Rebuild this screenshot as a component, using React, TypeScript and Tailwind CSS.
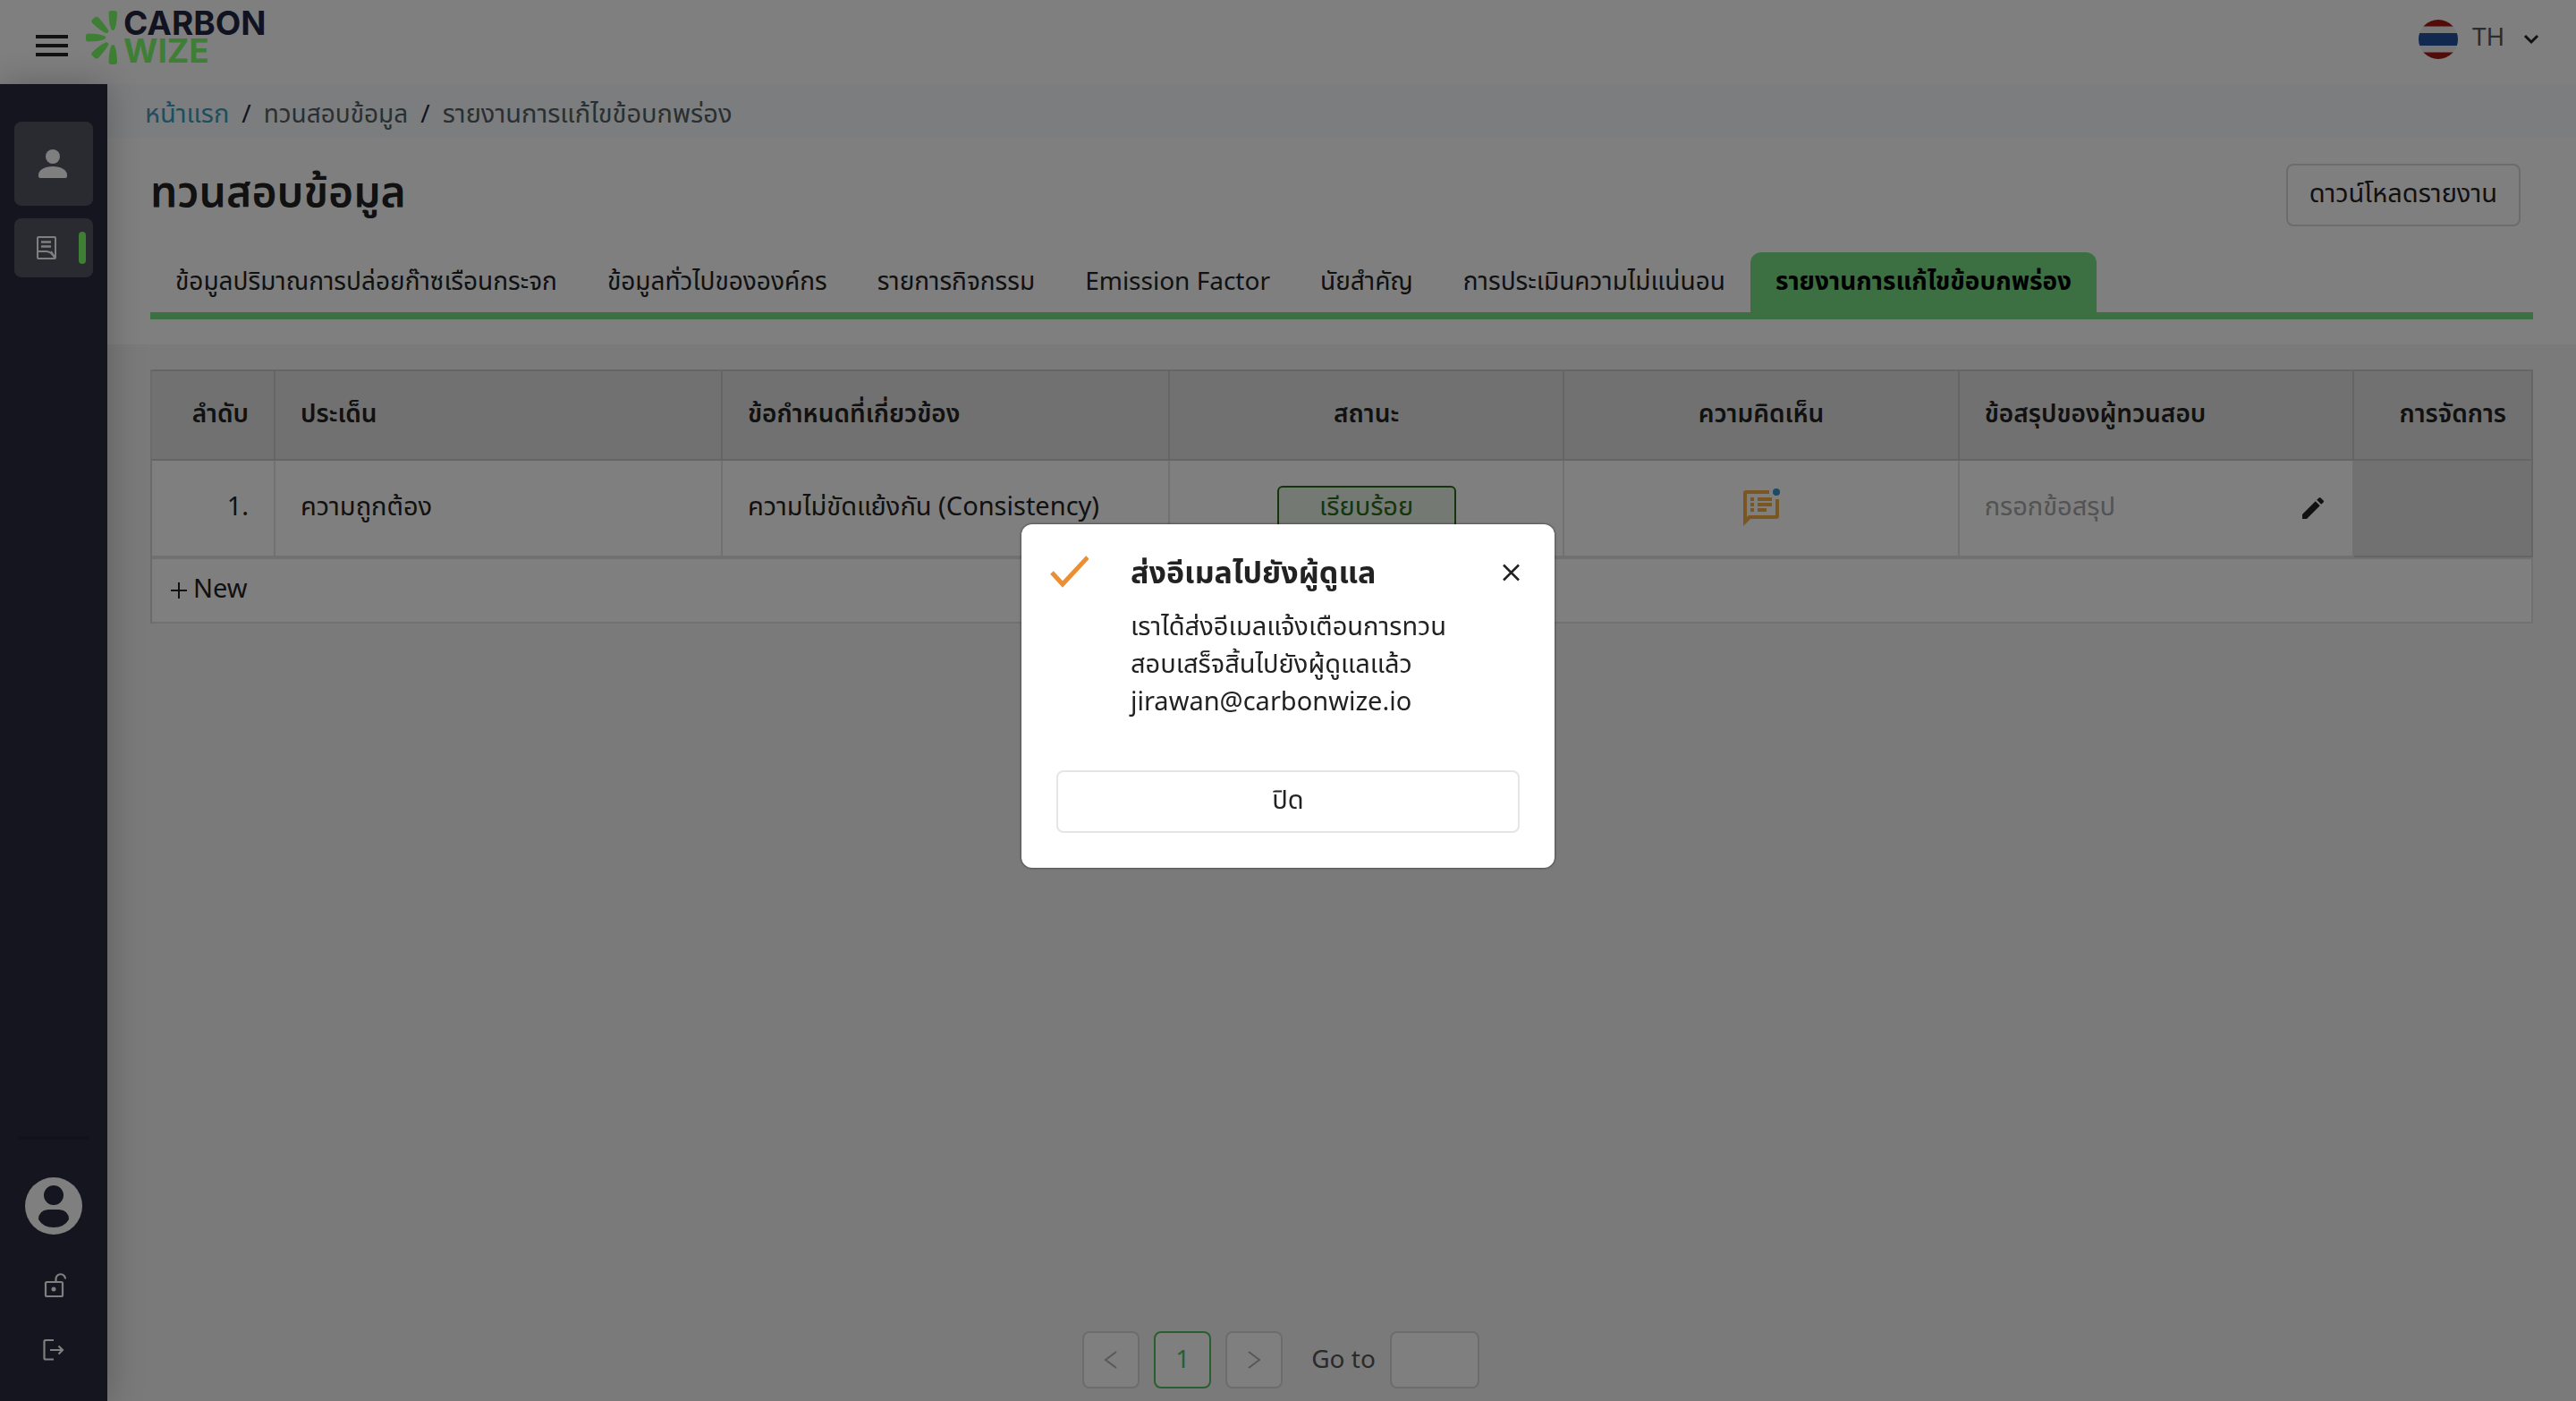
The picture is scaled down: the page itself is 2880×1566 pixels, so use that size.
import React from "react";

const tabs = [
  "ข้อมูลปริมาณการปล่อยก๊าซเรือนกระจก",
  "ข้อมูลทั่วไปขององค์กร",
  "รายการกิจกรรม",
  "Emission Factor",
  "นัยสำคัญ",
  "การประเมินความไม่แน่นอน",
];

function Logo() {
  return (
    <a href="#" aria-label="Carbon Wize" className="flex items-start gap-1.5">
      <svg width="36" height="60" viewBox="0 0 36 60" fill="#7efc6a" className="shrink-0">
        <path d="M25.500 3q0-3 3-3h3.500q3 0 3 3-.5 14-3 18-1.700 2-3.500 0-2.500-4-3-18z" />
        <path d="M25.500 57q0 3 3 3h3.500q3 0 3-3-.5-13-3-18-1.700-2-3.500 0-2.500 5-3 18z" />
        <path d="M2.500 25.500Q0 25.500 0 28v4q0 2.500 2.500 2.500 12.500 0 18-2.500 3.500-2 0-4-5.500-2.500-18-2.500z" />
        <path d="M7 13.500q-1.500-2 0-3.500l3.500-3q2-1 4 1 8 9 11 14.500 0 3-3 2.500-6-2-15.500-11.500z" />
        <path d="M7 46.500q-1.500 2 0 3.500l3.500 3.200q2 1 4-1 8-9 11-14.500 0-3-3-2.500-6 2-15.500 11.300z" />
      </svg>
      <span className="-mt-0.5 flex flex-col font-['Inter'] text-[37px] leading-[31px] font-bold">
        <span className="text-[#232940]">CARBON</span>
        <span className="text-[#7efc6a]">WIZE</span>
      </span>
    </a>
  );
}

function Flag() {
  return (
    <svg width="44" height="44" viewBox="0 0 44 44" className="shrink-0">
      <clipPath id="flag-circle">
        <circle cx="22" cy="22" r="22" />
      </clipPath>
      <g clipPath="url(#flag-circle)">
        <rect width="44" height="44" fill="#f0f0f0" />
        <rect width="44" height="7.500" fill="#a51a14" />
        <rect y="15" width="44" height="14" fill="#22509f" />
        <rect y="36.500" width="44" height="7.500" fill="#a51a14" />
      </g>
    </svg>
  );
}

function Sidebar() {
  return (
    <nav className="relative z-10 flex w-[120px] shrink-0 flex-col items-center bg-[#2a2a3e] pt-[42px] pb-[41px] text-white shadow-[0_0_40px_rgba(0,0,0,0.25)]">
      <button aria-label="ผู้ใช้" className="flex h-[94px] w-[88px] items-center justify-center rounded-lg bg-[#545463]">
        <svg width="48" height="48" viewBox="0 0 24 24" fill="currentColor" className="mr-0.5">
          <circle cx="12" cy="8" r="4" />
          <path d="M4 18.300C4 15.500 7.500 13.500 12 13.500s8 2 8 4.800v.7q0 1-1 1H5q-1 0-1-1z" />
        </svg>
      </button>
      <button aria-label="ทวนสอบข้อมูล" className="mt-3.5 flex h-[66px] w-[88px] items-center justify-between rounded-lg bg-[#545463] pr-2 pl-6">
        <svg width="24" height="28" viewBox="0 0 24 28" fill="none" stroke="currentColor" strokeWidth="2">
          <rect x="2" y="2" width="20" height="24" rx="1" />
          <path d="M6 7.500h11M6 12.500h11" strokeWidth="2.500" />
          <path d="M2 18h10q5 0 9 7M17 18l4 6" />
        </svg>
        <span className="h-9 w-2 rounded-full bg-[#7efc6a]" />
      </button>
      <div className="flex-1" />
      <div className="h-1 w-20 bg-[#242434]" />
      <button aria-label="บัญชี" className="mt-[42px]">
        <svg width="64" height="64" viewBox="0 0 64 64" fill="currentColor">
          <circle cx="32" cy="32" r="32" />
          <circle cx="32" cy="20" r="11" fill="#2a2a3e" />
          <path d="M26 36h12q11 1 11 11-5 9-17 9t-17-9q0-10 11-11z" fill="#2a2a3e" />
        </svg>
      </button>
      <button aria-label="ปลดล็อก" className="mt-[41px]">
        <svg width="32" height="32" viewBox="0 0 32 32" fill="none" stroke="currentColor" strokeWidth="2.200">
          <rect x="7" y="12" width="19" height="16" rx="1.500" />
          <path d="M18.500 12V8.500a5 5 0 0 1 10.500 0" />
          <circle cx="16" cy="20" r="2.500" fill="currentColor" stroke="none" />
        </svg>
      </button>
      <button aria-label="ออกจากระบบ" className="mt-10">
        <svg width="32" height="32" viewBox="0 0 32 32" fill="none" stroke="currentColor" strokeWidth="2.200">
          <path d="M16 5H7Q5.500 5 5.500 6.500v18.500q0 1.500 1.500 1.500h9M12 16h14M21.500 11.500l4.500 4.500-4.500 4.500" />
        </svg>
      </button>
    </nav>
  );
}

const headCell = "h-[102px] border-t-2 border-r-2 border-b-2 border-[#cacaca] bg-[#e2e2e2] px-7 pb-1.5 text-[28px] font-semibold";
const bodyCell = "h-[108px] border-r-2 border-b-2 border-[#e2e2e2] bg-white px-7";

function IssueTable() {
  return (
    <table className="w-full table-fixed border-separate border-spacing-0 border-l-2 border-[#d6d6d6] text-[29px]">
      <colgroup>
        <col className="w-[138px]" />
        <col className="w-[500px]" />
        <col className="w-[500px]" />
        <col />
        <col />
        <col />
        <col className="w-[200px]" />
      </colgroup>
      <thead>
        <tr>
          <th className={headCell + " text-right"}>ลำดับ</th>
          <th className={headCell + " text-left"}>ประเด็น</th>
          <th className={headCell + " text-left"}>ข้อกำหนดที่เกี่ยวข้อง</th>
          <th className={headCell + " text-center"}>สถานะ</th>
          <th className={headCell + " text-center"}>ความคิดเห็น</th>
          <th className={headCell + " text-left"}>ข้อสรุปของผู้ทวนสอบ</th>
          <th className={headCell + " text-right"}>การจัดการ</th>
        </tr>
      </thead>
      <tbody>
        <tr>
          <td className={bodyCell + " pb-1.5 text-right"}>1.</td>
          <td className={bodyCell + " pb-1.5"}>ความถูกต้อง</td>
          <td className={bodyCell + " pb-1.5"}>ความไม่ขัดแย้งกัน (Consistency)</td>
          <td className={bodyCell}>
            <div className="mx-auto flex h-[50px] w-[200px] items-center justify-center rounded-md border-2 border-[#2a6b17] bg-[#ebf2e8] pb-1.5 text-[#2a6b17]">
              เรียบร้อย
            </div>
          </td>
          <td className={bodyCell}>
            <button aria-label="ความคิดเห็น" className="mx-auto block">
              <svg width="44" height="44" viewBox="0 0 44 44">
                <path d="M31 2H5Q2 2 2 5v37l8-8h29q3 0 3-3V12h-4v18H8l-2 2V6h25z" fill="#f3ac45" />
                <path d="M10 10h4v4h-4zm8 0h16v4H18zM10 16h4v4h-4zm8 0h16v4H18zM10 22h4v4h-4zm8 0h10v4H18z" fill="#f3ac45" />
                <circle cx="39" cy="4" r="4" fill="#3b94c9" />
              </svg>
            </button>
          </td>
          <td className={bodyCell}>
            <div className="flex items-center justify-between">
              <span className="pb-1.5 text-[#a6a6a6]">กรอกข้อสรุป</span>
              <button aria-label="แก้ไข">
                <svg width="32" height="32" viewBox="0 0 24 24" fill="#222">
                  <path d="M3 17.250V21h3.750L17.810 9.940l-3.750-3.750L3 17.250zM20.710 7.040c.390-.390.390-1.020 0-1.410l-2.340-2.340a.996.996 0 0 0-1.410 0l-1.830 1.830 3.750 3.750 1.830-1.830z" />
                </svg>
              </button>
            </div>
          </td>
          <td className="border-r-2 border-b-2 border-[#cacaca] bg-[#e2e2e2]" />
        </tr>
        <tr>
          <td colSpan={7} className="h-[74px] border-t-2 border-r-2 border-b-2 border-[#e2e2e2] bg-white px-5">
            <button className="flex items-center gap-1">
              <svg width="22" height="22" viewBox="0 0 22 22" stroke="#222" strokeWidth="2">
                <path d="M1 11h18M10 2v18" />
              </svg>
              <span className="pb-1.5">New</span>
            </button>
          </td>
        </tr>
      </tbody>
    </table>
  );
}

function Pagination() {
  const box = "flex size-16 items-center justify-center rounded-lg border-2 bg-white";
  return (
    <div className="flex items-center justify-center gap-4 pr-[136px] pb-3.5">
      <button aria-label="ก่อนหน้า" className={box + " border-[#d9d9d9] text-[#b0b0b0]"}>
        <svg width="20" height="24" viewBox="0 0 20 24" fill="none" stroke="currentColor" strokeWidth="2">
          <path d="M16 3L4 12l12 9" />
        </svg>
      </button>
      <button className={box + " border-[#52be5c] pb-1 text-[#52be5c]"}>1</button>
      <button aria-label="ถัดไป" className={box + " border-[#d9d9d9] text-[#b0b0b0]"}>
        <svg width="20" height="24" viewBox="0 0 20 24" fill="none" stroke="currentColor" strokeWidth="2">
          <path d="M4 3l12 9-12 9" />
        </svg>
      </button>
      <label htmlFor="goto" className="ml-4 pb-1 text-[#555]">Go to</label>
      <input id="goto" type="text" className="h-16 w-[100px] rounded-lg border-2 border-[#d9d9d9] bg-white px-3" />
    </div>
  );
}

function Dialog() {
  return (
    <div className="fixed inset-0 z-20 flex items-center justify-center bg-black/50 pb-2.5 text-[29px]">
      <div role="dialog" aria-modal="true" aria-labelledby="dialog-title" className="w-[596px] rounded-xl bg-white px-[39px] pt-[30px] pb-[39px] shadow-[0_0_3px_rgba(0,0,0,0.7)]">
        <div className="flex items-start">
          <svg width="44" height="44" viewBox="0 0 44 44" fill="none" stroke="#ea8f33" strokeWidth="5" className="-ml-2 shrink-0">
            <path d="M3 24l12 13L43 7" />
          </svg>
          <div className="ml-[47px] flex-1">
            <h2 id="dialog-title" className="text-[34px] leading-[46px] font-bold">ส่งอีเมลไปยังผู้ดูแล</h2>
            <p className="mt-4 leading-[42px]">
              เราได้ส่งอีเมลแจ้งเตือนการทวน
              <br />
              สอบเสร็จสิ้นไปยังผู้ดูแลแล้ว
              <br />
              jirawan@carbonwize.io
            </p>
          </div>
          <button aria-label="ปิดหน้าต่าง" className="mt-3.5">
            <svg width="20" height="20" viewBox="0 0 20 20" stroke="#222" strokeWidth="2.500">
              <path d="M2 1.500l17 17M19 1.500l-17 17" />
            </svg>
          </button>
        </div>
        <button className="mt-[57px] h-[70px] w-full rounded-lg border-2 border-[#e5e5e5] pb-1.5">ปิด</button>
      </div>
    </div>
  );
}

export default function App() {
  return (
    <div className="flex min-h-screen flex-col bg-[#f4f4f4] font-['Noto_Sans','Noto_Sans_Thai',sans-serif] text-[28px] leading-10 text-[#222]">
      <header className="flex h-[94px] items-start justify-between bg-white pr-10 pl-10">
        <div className="flex items-start gap-5 pt-3">
          <button aria-label="เมนู" className="mt-[27px] flex w-9 flex-col gap-1.5">
            <span className="h-1 bg-[#222]" />
            <span className="h-1 bg-[#222]" />
            <span className="h-1 bg-[#222]" />
          </button>
          <Logo />
        </div>
        <button className="mt-5 flex items-center text-[#4e5a63]">
          <Flag />
          <span className="ml-4 w-14 pb-2 text-left">TH</span>
          <svg width="20" height="14" viewBox="0 0 20 14" fill="none" stroke="#222" strokeWidth="3">
            <path d="M3 3l7 7 7-7" />
          </svg>
        </button>
      </header>
      <div className="flex flex-1">
        <Sidebar />
        <main className="flex min-w-0 flex-1 flex-col">
          <nav aria-label="breadcrumb" className="flex h-[60px] items-center gap-3.5 bg-[#f8fbff] px-[42px] pt-1 text-[#555f62]">
            <a href="#" className="text-[29px] text-[#3f9dc0]">หน้าแรก</a>
            <span className="text-[#232940]">/</span>
            <a href="#">ทวนสอบข้อมูล</a>
            <span className="text-[#232940]">/</span>
            <span className="text-[29px]">รายงานการแก้ไขข้อบกพร่อง</span>
          </nav>
          <section className="bg-white px-12 pb-7">
            <div className="flex items-start justify-between pt-[29px] pr-3.5">
              <h1 className="text-5xl leading-[60px] font-semibold">ทวนสอบข้อมูล</h1>
              <button className="h-[70px] rounded-lg border-2 border-[#d9d9d9] px-6 pb-1.5 text-[29px]">ดาวน์โหลดรายงาน</button>
            </div>
            <div role="tablist" className="mt-[29px] flex border-b-8 border-[#79e084]">
              {tabs.map((t) => (
                <button key={t} role="tab" className="h-[67px] px-7 pb-1.5 whitespace-nowrap">{t}</button>
              ))}
              <button role="tab" aria-selected="true" className="h-[67px] rounded-t-xl bg-[#79e084] px-7 pb-1.5 font-bold whitespace-nowrap text-black">
                รายงานการแก้ไขข้อบกพร่อง
              </button>
            </div>
          </section>
          <div className="px-12 pt-7">
            <IssueTable />
          </div>
          <div className="flex-1" />
          <Pagination />
        </main>
      </div>
      <Dialog />
    </div>
  );
}
